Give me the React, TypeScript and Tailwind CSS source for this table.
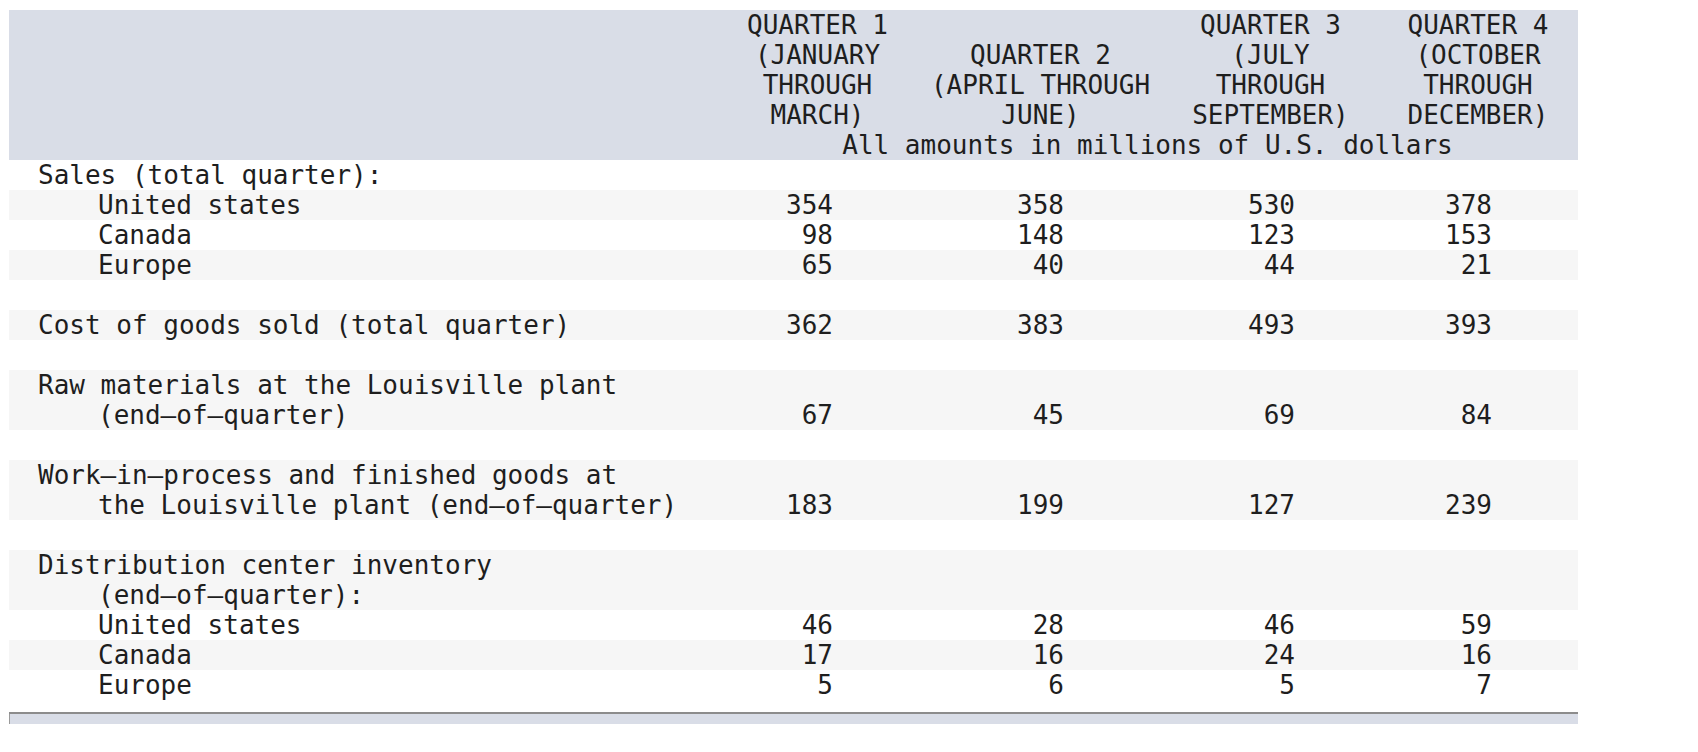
type Row = {
  lines: string[];
  indent?: boolean;
  subIndent?: boolean;
  values?: string[];
};

const rows: Row[] = [
  { lines: ["Sales (total quarter):"] },
  { lines: ["United states"], indent: true, values: ["354", "358", "530", "378"] },
  { lines: ["Canada"], indent: true, values: ["98", "148", "123", "153"] },
  { lines: ["Europe"], indent: true, values: ["65", "40", "44", "21"] },
  { lines: [""] },
  { lines: ["Cost of goods sold (total quarter)"], values: ["362", "383", "493", "393"] },
  { lines: [""] },
  {
    lines: ["Raw materials at the Louisville plant", "(end–of–quarter)"],
    subIndent: true,
    values: ["67", "45", "69", "84"],
  },
  { lines: [""] },
  {
    lines: ["Work–in–process and finished goods at", "the Louisville plant (end–of–quarter)"],
    subIndent: true,
    values: ["183", "199", "127", "239"],
  },
  { lines: [""] },
  {
    lines: ["Distribution center inventory", "(end–of–quarter):"],
    subIndent: true,
  },
  { lines: ["United states"], indent: true, values: ["46", "28", "46", "59"] },
  { lines: ["Canada"], indent: true, values: ["17", "16", "24", "16"] },
  { lines: ["Europe"], indent: true, values: ["5", "6", "5", "7"] },
];

const numPad = ["pr-[85px]", "pr-[99px]", "pr-[83px]", "pr-[86px]"];

const App = () => {
  return (
    <div className="min-h-screen bg-white pt-[10px] pl-[9px] font-['DejaVu_Sans_Mono',monospace] text-[26px] leading-[30px] text-[#1e1e1e]">
      <table className="table-fixed border-collapse w-[1569px]">
        <colgroup>
          <col className="w-[708px]" />
          <col className="w-[201px]" />
          <col className="w-[245px]" />
          <col className="w-[215px]" />
          <col className="w-[200px]" />
        </colgroup>
        <thead className="bg-[#d9dde7]">
          <tr>
            <th rowSpan={2} className="p-0"></th>
            <th className="p-0 font-normal text-center align-bottom">
              QUARTER 1<br />(JANUARY<br />THROUGH<br />MARCH)
            </th>
            <th className="p-0 font-normal text-center align-bottom">
              QUARTER 2<br />(APRIL THROUGH<br />JUNE)
            </th>
            <th className="p-0 font-normal text-center align-bottom">
              QUARTER 3<br />(JULY<br />THROUGH<br />SEPTEMBER)
            </th>
            <th className="p-0 font-normal text-center align-bottom">
              QUARTER 4<br />(OCTOBER<br />THROUGH<br />DECEMBER)
            </th>
          </tr>
          <tr>
            <th colSpan={4} className="p-0 font-normal text-center">
              All amounts in millions of U.S. dollars
            </th>
          </tr>
        </thead>
        <tbody>
          {rows.map((row, i) => (
            <tr key={i} className={i % 2 === 1 ? "bg-[#f6f6f6]" : "bg-white"}>
              <td className={`p-0 align-top ${row.indent ? "pl-[89px]" : "pl-[29px]"}`}>
                {row.lines.map((line, j) => (
                  <div key={j} className={`h-[30px] whitespace-pre ${row.subIndent && j > 0 ? "pl-[60px]" : ""}`}>
                    {line}
                  </div>
                ))}
              </td>
              {[0, 1, 2, 3].map((c) => (
                <td key={c} className={`p-0 text-right align-bottom ${numPad[c]}`}>
                  {row.values ? row.values[c] : ""}
                </td>
              ))}
            </tr>
          ))}
        </tbody>
      </table>
      <div className="mt-[12px] w-[1569px] border-t-2 border-[#8c8c8c]">
        <div className="h-[10px] bg-[#d9dde7] border-l border-[#9a9a9a]"></div>
      </div>
    </div>
  );
};

export default App;
